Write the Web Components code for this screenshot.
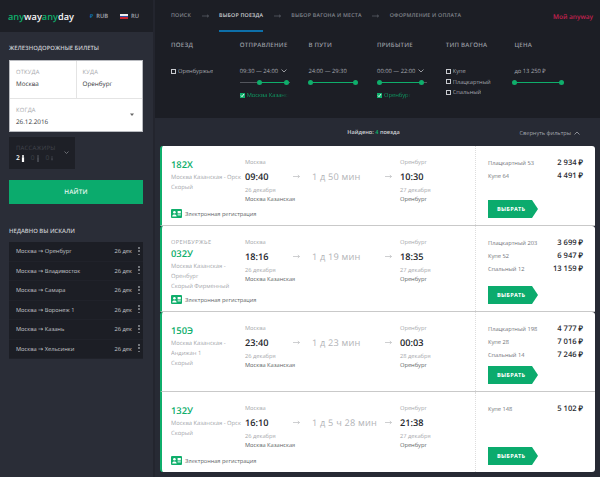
<!DOCTYPE html>
<html lang="ru"><head><meta charset="utf-8"><title>anywayanyday</title>
<style>
html,body{margin:0;height:477px;overflow:hidden;background:#272a34;font-family:"Open Sans",sans-serif;text-rendering:geometricPrecision}
.to{font-family:"DejaVu Sans",sans-serif;font-size:6.2px;font-weight:400}
</style></head><body>
<aw-app></aw-app>
<script>
const def=(n,html)=>{customElements.define(n,class extends HTMLElement{
  constructor(){super();this.attachShadow({mode:'open'}).innerHTML=typeof html==='function'?html(this):html;}
  connectedCallback(){ if(typeof html==='function'&&this.getAttributeNames().length){this.shadowRoot.innerHTML=html(this);} }
});};
const a=(e,k,d='')=>e.getAttribute(k)??d;

def('aw-check',e=>`<style>
:host{display:flex;align-items:center;gap:2px;height:10.5px;font-size:5.7px;color:${e.hasAttribute('on')?'#0f9c62':'#a4a7ae'};white-space:nowrap}
i{width:3px;height:3px;border:1px solid #c9cbd0;display:block;flex:none;background:${e.hasAttribute('on')?'#0fae6b':'transparent'};${e.hasAttribute('on')?'border-color:#0fae6b;':''}position:relative}
svg{position:absolute;left:-1px;top:-1px;width:5px;height:5px}
span{overflow:hidden;display:block}
:host([on]) span{-webkit-mask-image:linear-gradient(90deg,#000 80%,transparent)}
</style><i>${e.hasAttribute('on')?'<svg viewBox="0 0 5 5"><path d="M1 2.5l1 1.2L4 1" fill="none" stroke="#fff" stroke-width=".9"/></svg>':''}</i><span><slot></slot></span>`);

def('aw-slider',e=>{const w=+a(e,'w',50),f=+a(e,'from',0),t=+a(e,'to',w);return `<style>
:host{display:block;position:relative;width:${w}px;height:5px;margin-left:${a(e,'ml',0)}px}
.t,.g{position:absolute;top:2px;height:1px}.t{left:0;right:0;background:#53565d}.g{background:#0fae6b;left:${f}px;width:${t-f}px}
b{position:absolute;top:0;width:5px;height:5px;margin-left:-2.5px;border-radius:50%;background:#0fae6b}
</style><div class="t"></div><div class="g"></div><b style="left:${f}px"></b><b style="left:${t}px"></b>`});

def('aw-filter',e=>`<style>
:host{display:flex;flex-direction:column;min-width:0}
h4{margin:0;height:26px;font-size:6.1px;line-height:10px;font-weight:600;letter-spacing:.25px;color:#9a9da4;white-space:nowrap}
.b{display:flex;flex-direction:column}
</style><h4>${a(e,'label')}</h4><div class="b"><slot></slot></div>`);

def('aw-range-label',e=>`<style>
:host{display:flex;align-items:center;gap:3px;height:10px;font-size:5.8px;color:#a4a7ae;white-space:nowrap;margin-bottom:4px}
svg{width:6px;height:4px}
</style><slot></slot>${e.hasAttribute('arrow')?'<svg viewBox="0 0 6 4"><path d="M.5.5L3 3 5.5.5" fill="none" stroke="#b6b8bd" stroke-width=".8"/></svg>':''}`);

const navArrow='<svg viewBox="0 0 7 4"><path d="M0 2h6.5M5 .7L6.6 2 5 3.3" fill="none" stroke="#6d7078" stroke-width=".6"/></svg>';
def('aw-nav','<style>:host{display:flex;align-items:center;height:32px;padding:0 7px 0 16px;font-size:5.3px;font-weight:600;letter-spacing:.2px;color:#83868e;white-space:nowrap}'+
 '.s{height:32px;line-height:30px;box-sizing:border-box}.on{color:#cfd1d5;border-bottom:2px solid #0d6fa9}'+
 'svg{width:7px;height:4px;margin:0 10.5px;flex:none}.me{margin-left:auto;font-size:6.5px;font-weight:600;letter-spacing:0;color:#c4214f}</style>'+
 '<span class="s">ПОИСК</span>'+navArrow+'<span class="s on">ВЫБОР ПОЕЗДА</span>'+navArrow+'<span class="s">ВЫБОР ВАГОНА И МЕСТА</span>'+navArrow+'<span class="s">ОФОРМЛЕНИЕ И ОПЛАТА</span><span class="me">Мой anyway</span>');

def('aw-filters',`<style>
:host{display:grid;grid-template-columns:repeat(6,68.7px);height:86px;padding:8px 0 0 16px;box-sizing:border-box;background:#1c1e25}
</style><slot></slot>`);

def('aw-fare',e=>`<style>
:host{display:flex;justify-content:space-between;align-items:center;height:13.4px;font-size:5.7px;color:#6f7278;white-space:nowrap}
b{font-size:7.6px;font-weight:600;color:#2b2d33}
</style><span><slot></slot></span><b>${a(e,'price')}</b>`);

const cardArrow='<svg viewBox="0 0 7 5"><path d="M0 2.5h6.4M4.8 1l1.7 1.5L4.8 4" fill="none" stroke="#b9babd" stroke-width=".7"/></svg>';
def('aw-train-card',e=>`<style>
:host{display:grid;grid-template-columns:83px 48px 19px 74px 14px 75px 1fr;height:${a(e,'h',80)}px;box-sizing:border-box;background:#fff;border-left:2px solid #0fae6b;border-bottom:1px solid #c9c9c9;border-radius:3px 3px 0 0;color:#2b2d33;white-space:nowrap}
:host([last]){border-bottom:0;border-radius:0 0 3px 3px}
.info{display:flex;flex-direction:column;padding:12px 0 7px 9px;font-size:5.8px;color:#a5a7ab;min-width:0}
.brand{font-size:5.6px;line-height:9px;letter-spacing:.4px;color:#a0a3a8}
.num{font-size:9.4px;line-height:13px;font-weight:600;color:#0fae6b;margin-bottom:1px}
.ln{line-height:10px;height:10px;overflow:hidden}
.reg{margin-top:auto;display:flex;align-items:center;gap:3px;color:#5c5f65;height:9px;font-size:5.6px}
.reg svg{width:11px;height:9px;flex:none}
.pt{display:flex;flex-direction:column;padding-top:11px;font-size:5.7px;color:#a5a7ab;min-width:0}
.pt .c{line-height:10px}.pt .t{font-size:9.2px;font-weight:600;line-height:15px;margin-top:2px;color:#26282d}
.pt .d{line-height:9px;margin-top:2px}.pt .s{line-height:10px;margin-top:-1px;color:#5c5f65}
.ar{display:flex;padding-top:28px}.ar svg{width:7px;height:5px}
.dur{padding-top:24px;font-size:9.2px;line-height:14px;letter-spacing:.2px;color:#b2b4b7}
.fares{border-left:1px dotted #ddd;padding:10px 12px 7px 12px;display:flex;flex-direction:column}
.btn{margin-top:auto;width:50px;height:18px;box-sizing:border-box;padding-left:9px;font-size:5.6px;font-weight:700;letter-spacing:.25px;line-height:18px;color:#fff;background:#0bab6d;clip-path:polygon(0 0,44px 0,100% 50%,44px 100%,0 100%)}
</style>
<div class="info">${e.hasAttribute('brand')?`<div class="brand">${a(e,'brand')}</div>`:''}<div class="num">${a(e,'num')}</div>
${a(e,'route').split('|').map(x=>`<div class="ln">${x}</div>`).join('')}<div class="ln">${a(e,'kind')}</div>
${e.hasAttribute('reg')?`<div class="reg"><svg viewBox="0 0 11 9"><rect width="11" height="9" rx="1" fill="#0fae6b"/><circle cx="3.4" cy="3.2" r="1.3" fill="#fff"/><path d="M1.2 7.5c0-2.6 4.4-2.6 4.4 0z" fill="#fff"/><rect x="6.6" y="2" width="3.2" height="2.4" fill="#fff"/><rect x="6.6" y="5.4" width="3.2" height="1" fill="#fff"/></svg>Электронная регистрация</div>`:''}</div>
<div class="pt"><div class="c">Москва</div><div class="t">${a(e,'dep')}</div><div class="d">${a(e,'depd')}</div><div class="s">Москва Казанская</div></div>
<div class="ar">${cardArrow}</div>
<div class="dur">${a(e,'dur')}</div>
<div class="ar" style="margin-left:-1px">${cardArrow}</div>
<div class="pt"><div class="c">Оренбург</div><div class="t">${a(e,'arr')}</div><div class="d">${a(e,'arrd')}</div><div class="s">Оренбург</div></div>
<div class="fares"><slot></slot><div class="btn">ВЫБРАТЬ</div></div>`);

def('aw-recent-row',e=>`<style>
:host{display:flex;align-items:center;height:19.5px;padding:0 3px 0 7px;font-size:5.7px;font-weight:500;color:#c4c6cb;white-space:nowrap;border-bottom:1px solid #20222a;box-sizing:border-box}
.d{margin-left:auto;margin-right:6px}
i{display:block;width:2px;height:9px;background:repeating-linear-gradient(#73767c 0 1.6px,transparent 1.6px 3.4px)}
.x{white-space:pre}
</style><span class="x">${a(e,'from','Москва')} <slot name="to"></slot> ${a(e,'city')}</span><span class="d">26 дек</span><i></i>`);

def('aw-search-form',`<style>
:host{display:block;background:#fff;width:134px;border:1px solid #b9bbc0;box-sizing:border-box;color:#33353a;font-size:6.3px}
.r{display:flex;height:38px;border-bottom:1px solid #e4e4e4;box-sizing:border-box}
.f{flex:1;padding:7px 0 0 6px;box-sizing:border-box}.f+.f{border-left:1px solid #e4e4e4}
label{display:block;font-size:5.8px;line-height:9px;color:#a7a9ad;letter-spacing:.2px}
span{display:block;line-height:11px;margin-top:1px}
.w{position:relative;padding:7px 0 0 6px;height:32px;box-sizing:border-box}
.w svg{position:absolute;right:8px;top:14px;width:4px;height:3px}
</style><div class="r"><div class="f"><label>ОТКУДА</label><span>Москва</span></div><div class="f"><label>КУДА</label><span>Оренбург</span></div></div>
<div class="w"><label>КОГДА</label><span>26.12.2016</span><svg viewBox="0 0 4 3"><path d="M0 .5h4L2 3z" fill="#666"/></svg></div>`);

def('aw-pax',`<style>
:host{display:block;position:relative;width:66px;height:32px;margin-top:5px;background:#1e2027;box-sizing:border-box;padding:7px 0 0 7px;color:#fff}
.l{font-size:6px;line-height:9px;letter-spacing:.2px;color:#42454d}
.v{display:flex;align-items:center;font-size:6.6px;line-height:10px;font-weight:600}
.v span{color:#3d4048;font-weight:400;margin-left:6px}.v svg{width:4px;height:7px;margin-left:1px}
.c{position:absolute;right:6px;top:14px;width:5px;height:3px}
</style><div class="l">ПАССАЖИРЫ</div><div class="v">2<svg viewBox="0 0 4 7"><circle cx="2" cy="1" r="1" fill="#fff"/><rect x=".9" y="2.2" width="2.2" height="4.8" fill="#fff"/></svg>
<span>0</span><svg viewBox="0 0 4 7"><circle cx="2" cy="1" r="1" fill="#43464e"/><rect x="1" y="2.2" width="2" height="4.8" fill="#43464e"/></svg>
<span>0</span><svg viewBox="0 0 4 7" style="height:5px"><circle cx="2" cy="1.5" r="1" fill="#43464e"/><rect x="1" y="3" width="2" height="3" fill="#43464e"/></svg></div>
<svg class="c" viewBox="0 0 5 3"><path d="M.5.5L2.5 2.5 4.5.5" fill="none" stroke="#8b8e94" stroke-width=".7"/></svg>`);

def('aw-sidebar',`<style>
:host{display:flex;flex-direction:column;flex:none;width:155px;height:477px;box-sizing:border-box;background:#2a2d37;border-right:2px solid #23252e}
.top{height:32px;flex:none;background:#1d1f26;display:flex;align-items:center;padding-left:8px;font-size:5.8px;font-weight:600;color:#a4a7ae;white-space:nowrap}
.logo{font-size:9.2px;font-weight:600;color:#f4f5f6;width:82px}.logo b{font-weight:600;color:#0fae6b}
.cur{display:flex;align-items:center;gap:3px;width:30px}
.cur i{font-style:normal;color:#0d6fa9;font-size:5.5px}
.flag{width:8px;height:5px;background:linear-gradient(#eee 0 33%,#2b4fa8 33% 66%,#c8242e 66%)}
.body{padding:0 9px}
h3{margin:0;font-size:5.9px;font-weight:600;color:#c9cbd0;line-height:9px;white-space:nowrap}
.t1{padding-top:12px;padding-bottom:7px}
.go{margin-top:11px;width:134px;height:24px;background:#0bab6d;color:#e8f7f0;font-size:6.3px;font-weight:600;letter-spacing:.2px;text-align:center;line-height:23px}
.t2{padding-top:22.5px;padding-bottom:6.5px}
.list{width:134px;background:#1c1e25}
</style><div class="top"><div class="logo"><b>any</b>way<b>any</b>day</div><div class="cur"><i>₽</i>RUB</div><div class="cur"><span class="flag"></span>RU</div></div>
<div class="body"><h3 class="t1">ЖЕЛЕЗНОДОРОЖНЫЕ БИЛЕТЫ</h3><aw-search-form></aw-search-form><aw-pax></aw-pax><div class="go">НАЙТИ</div>
<h3 class="t2">НЕДАВНО ВЫ ИСКАЛИ</h3><div class="list"><slot></slot></div></div>`);

def('aw-app',`<style>
:host{display:flex;width:600px;height:477px;overflow:hidden;background:#272a34}
main{flex:1;min-width:0;display:flex;flex-direction:column}
.hd{background:#1c1e25}
.bar{height:28px;flex:none;display:flex;align-items:center;position:relative;justify-content:center;font-size:5.6px;font-weight:600;color:#d0d2d6;white-space:nowrap;padding-right:8px;box-sizing:border-box}
.bar em{font-style:normal;color:#0fae6b}
.bar .col{position:absolute;right:20px;top:11px;font-weight:400;color:#a4a7ae;display:flex;align-items:center;gap:3px}
.bar svg{width:6px;height:4px}
.cards{padding-left:5px;width:435px}
.to{font-family:"DejaVu Sans",sans-serif;font-size:6.2px;font-weight:400}
</style><aw-sidebar>
<aw-recent-row city="Оренбург"><span slot="to" style="font:400 6.2px 'DejaVu Sans',sans-serif">→</span></aw-recent-row>
<aw-recent-row city="Владивосток"><span slot="to" style="font:400 6.2px 'DejaVu Sans',sans-serif">→</span></aw-recent-row>
<aw-recent-row city="Самара"><span slot="to" style="font:400 6.2px 'DejaVu Sans',sans-serif">→</span></aw-recent-row>
<aw-recent-row city="Воронеж 1"><span slot="to" style="font:400 6.2px 'DejaVu Sans',sans-serif">→</span></aw-recent-row>
<aw-recent-row city="Казань"><span slot="to" style="font:400 6.2px 'DejaVu Sans',sans-serif">→</span></aw-recent-row>
<aw-recent-row city="Хельсинки"><span slot="to" style="font:400 6.2px 'DejaVu Sans',sans-serif">→</span></aw-recent-row>
</aw-sidebar>
<main><div class="hd"><aw-nav></aw-nav>
<aw-filters>
<aw-filter label="ПОЕЗД"><aw-check>Оренбуржье</aw-check></aw-filter>
<aw-filter label="ОТПРАВЛЕНИЕ"><aw-range-label arrow>09:30 — 24:00</aw-range-label><aw-slider w="50" from="20" to="47"></aw-slider><div style="height:5px"></div><aw-check on style="width:49px">Москва Казанская</aw-check></aw-filter>
<aw-filter label="В ПУТИ"><aw-range-label>24:00 — 29:30</aw-range-label><aw-slider w="47" ml="1" from="1" to="46"></aw-slider></aw-filter>
<aw-filter label="ПРИБЫТИЕ"><aw-range-label arrow>00:00 — 22:00</aw-range-label><aw-slider w="50" from="2" to="44"></aw-slider><div style="height:5px"></div><aw-check on>Оренбург</aw-check></aw-filter>
<aw-filter label="ТИП ВАГОНА"><aw-check>Купе</aw-check><aw-check>Плацкартный</aw-check><aw-check>Спальный</aw-check></aw-filter>
<aw-filter label="ЦЕНА"><aw-range-label>до 13 250 ₽</aw-range-label><aw-slider w="50" from="0" to="47"></aw-slider></aw-filter>
</aw-filters></div>
<div class="bar"><span>Найдено: <em>4</em> поезда</span><span class="col">Свернуть фильтры<svg viewBox="0 0 6 4"><path d="M.5 3.5L3 1l2.5 2.5" fill="none" stroke="#a4a7ae" stroke-width=".8"/></svg></span></div>
<div class="cards">
<aw-train-card h="80" num="182Х" route="Москва Казанская - Орск" kind="Скорый" reg dep="09:40" depd="26 декабря" dur="1 д 50 мин" arr="10:30" arrd="27 декабря"><aw-fare price="2 934 ₽">Плацкартный 53</aw-fare><aw-fare price="4 491 ₽">Купе 64</aw-fare></aw-train-card>
<aw-train-card h="86" brand="ОРЕНБУРЖЬЕ" num="032У" route="Москва Казанская -|Оренбург" kind="Скорый Фирменный" reg dep="18:16" depd="26 декабря" dur="1 д 19 мин" arr="18:35" arrd="27 декабря"><aw-fare price="3 699 ₽">Плацкартный 203</aw-fare><aw-fare price="6 947 ₽">Купе 52</aw-fare><aw-fare price="13 159 ₽">Спальный 12</aw-fare></aw-train-card>
<aw-train-card h="80" num="150Э" route="Москва Казанская -|Андижан 1" kind="Скорый" dep="23:40" depd="26 декабря" dur="1 д 23 мин" arr="00:03" arrd="28 декабря"><aw-fare price="4 777 ₽">Плацкартный 198</aw-fare><aw-fare price="7 016 ₽">Купе 28</aw-fare><aw-fare price="7 246 ₽">Спальный 14</aw-fare></aw-train-card>
<aw-train-card h="80" last num="132У" route="Москва Казанская - Орск" kind="Скорый" reg dep="16:10" depd="26 декабря" dur="1 д 5 ч 28 мин" arr="21:38" arrd="27 декабря"><aw-fare price="5 102 ₽">Купе 148</aw-fare></aw-train-card>
</div></main>`);
</script></body></html>
